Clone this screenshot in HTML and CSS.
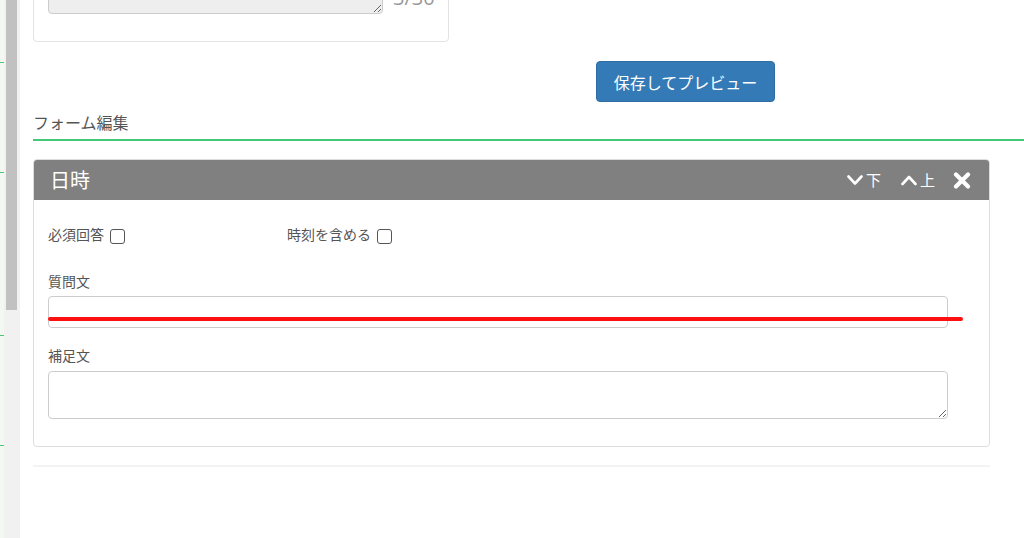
FILE: index.html
```html
<!DOCTYPE html>
<html lang="ja">
<head>
    <meta charset="UTF-8">
    <meta name="viewport" content="width=device-width, initial-scale=1.0">
    <title>フォーム編集</title>
    <link rel="stylesheet" href="styles.css">
</head>
<body>
    <div class="page">
        <aside class="rail">
            <div class="rail-edge">
                <div class="tick tick-1"></div>
                <div class="tick tick-2"></div>
                <div class="tick tick-3"></div>
                <div class="tick tick-4"></div>
            </div>
            <div class="scrollbar"><div class="thumb"></div></div>
        </aside>

        <main class="content">
            <div class="card top-card">
                <div class="count-row">
                    <textarea class="ta-readonly" readonly></textarea>
                    <span class="count">3/30</span>
                </div>
            </div>

            <div class="actions">
                <button class="btn-primary">保存してプレビュー</button>
            </div>

            <h2 class="section-title">フォーム編集</h2>

            <div class="panel">
                <div class="panel-head">
                    <span class="panel-title">日時</span>
                    <div class="tools">
                        <span class="tool">
                            <svg width="16" height="11" viewBox="0 0 16 11"><polyline points="1.5,1.5 8,8.5 14.5,1.5" fill="none" stroke="#fff" stroke-width="2.6" stroke-linecap="round" stroke-linejoin="round"/></svg>下
                        </span>
                        <span class="tool">
                            <svg width="16" height="11" viewBox="0 0 16 11"><polyline points="1.5,9 8,2 14.5,9" fill="none" stroke="#fff" stroke-width="2.6" stroke-linecap="round" stroke-linejoin="round"/></svg>上
                        </span>
                        <span class="tool tool-close">
                            <svg width="18" height="17" viewBox="0 0 18 17"><path d="M3 2.5 L15 14.5 M15 2.5 L3 14.5" fill="none" stroke="#fff" stroke-width="4.2" stroke-linecap="round"/></svg>
                        </span>
                    </div>
                </div>
                <div class="panel-body">
                    <div class="check-row">
                        <label class="check-item">必須回答 <input type="checkbox"></label>
                        <label class="check-item">時刻を含める <input type="checkbox"></label>
                    </div>

                    <label class="field-label">質問文</label>
                    <input type="text" class="field-input">

                    <label class="field-label">補足文</label>
                    <textarea class="field-textarea"></textarea>

                    <div class="mark-line"></div>
                </div>
            </div>

            <hr class="divider">
        </main>
    </div>
</body>
</html>
```

FILE: styles.css
```css
html, body {
    margin: 0;
    padding: 0;
    height: 100%;
    overflow: hidden;
}
body {
    font-family: "Noto Sans CJK JP", "Noto Sans", "Liberation Sans", sans-serif;
    background-color: #ffffff;
    color: #555555;
}
.page {
    display: flex;
    height: 538px;
}

/* left rail + scrollbar */
.rail {
    display: flex;
    width: 20px;
    flex-shrink: 0;
}
.rail-edge {
    width: 4px;
    background-color: #f3f9f2;
}
.tick {
    height: 1px;
    background-color: #4cc77a;
}
.tick-1 { margin-top: 62px; }
.tick-2 { margin-top: 109px; }
.tick-3 { margin-top: 162px; }
.tick-4 { margin-top: 109px; }
.scrollbar {
    flex: 1;
    background-color: #f1f1f1;
    padding: 0 3px 0 2px;
}
.thumb {
    height: 310px;
    background-color: #c1c1c1;
}

.content {
    flex: 1;
    padding-left: 13px;
}

/* top card (scrolled off) */
.card {
    border: 1px solid #e3e3e3;
    border-radius: 4px;
    background-color: #fff;
}
.top-card {
    width: 400px;
    margin-top: -62px;
    padding: 15px 0 27px 14px;
}
.count-row {
    display: flex;
    align-items: flex-end;
}
.ta-readonly {
    width: 335px;
    height: 60px;
    box-sizing: border-box;
    background-color: #eeeeee;
    border: 1px solid #cccccc;
    border-radius: 4px;
    resize: vertical;
    margin: 0;
    display: block;
}
.count {
    margin-left: 10px;
    margin-bottom: 6px;
    font-size: 20px;
    line-height: 20px;
    color: #999999;
    font-family: "Open Sans", "Noto Sans", sans-serif;
}

.actions {
    margin-top: 19px;
    padding-left: 563px;
}
.btn-primary {
    display: block;
    width: 179px;
    height: 41px;
    background-color: #337ab7;
    color: #ffffff;
    border: 1px solid #2e6da4;
    border-radius: 4px;
    font-family: inherit;
    font-size: 16px;
    padding: 0;
}

.section-title {
    margin: 8px 0 0;
    font-size: 16px;
    font-weight: normal;
    line-height: 24px;
    color: #555555;
    padding-bottom: 5px;
    border-bottom: 2px solid #41c879;
}

/* panel */
.panel {
    width: 955px;
    margin-top: 18px;
    border: 1px solid #dddddd;
    border-radius: 4px;
    overflow: hidden;
}
.panel-head {
    display: flex;
    align-items: center;
    justify-content: space-between;
    height: 40px;
    background-color: #808080;
    padding: 0 18px 0 16px;
    color: #ffffff;
}
.panel-title {
    font-size: 20px;
    line-height: 24px;
}
.tools {
    display: flex;
    align-items: center;
    gap: 20px;
}
.tool {
    display: flex;
    align-items: center;
    gap: 3px;
    font-size: 15px;
    line-height: 20px;
}
.tool-close {
    margin-left: -2px;
}

.panel-body {
    position: relative;
    padding: 23px 41px 27px 14px;
}
.check-row {
    display: grid;
    grid-template-columns: 239px auto;
    line-height: 22px;
}
.check-item {
    display: flex;
    align-items: center;
    font-size: 14px;
    gap: 2px;
}
.check-item input {
    appearance: none;
    width: 15px;
    height: 15px;
    margin: 4px 0 0 4px;
    border: 1px solid #555555;
    border-radius: 3px;
    background-color: #fff;
}
.field-label {
    display: block;
    font-size: 14px;
    line-height: 20px;
    margin-top: 26px;
    margin-bottom: 5px;
}
.field-label + .field-input + .field-label {
    margin-top: 17px;
    margin-bottom: 6px;
}
.field-input {
    display: block;
    width: 100%;
    height: 32px;
    box-sizing: border-box;
    border: 1px solid #cccccc;
    border-radius: 4px;
    margin: 0;
}
.field-textarea {
    display: block;
    width: 100%;
    height: 48px;
    box-sizing: border-box;
    border: 1px solid #cccccc;
    border-radius: 4px;
    margin: 0;
    resize: vertical;
}

/* red annotation stroke */
.mark-line {
    position: absolute;
    left: 14px;
    top: 117px;
    width: 915px;
    height: 4px;
    background-color: #ff1010;
    border-radius: 2px;
}

.divider {
    width: 957px;
    margin: 18px 0 0;
    border: 0;
    border-top: 2px solid #f3f3f3;
}
```
